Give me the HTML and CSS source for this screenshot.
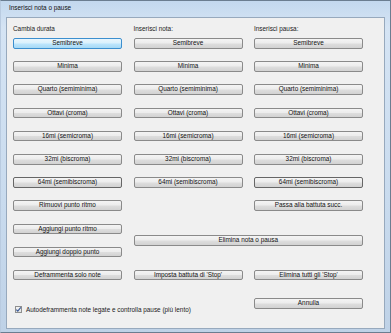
FILE: index.html
```html
<!DOCTYPE html>
<html lang="it">
<head>
    <meta charset="UTF-8">
    <title>Inserisci nota o pause</title>
    <link rel="stylesheet" href="styles.css">
</head>
<body>

<div class="window">
    <div class="title-bar">Inserisci nota o pause</div>
    <div class="client">
        <div class="labels">
            <span>Cambia durata</span>
            <span>Inserisci nota:</span>
            <span>Inserisci pausa:</span>
        </div>

        <div class="durations">
            <button class="focused">Semibreve</button>
            <button>Semibreve</button>
            <button>Semibreve</button>
            <button>Minima</button>
            <button>Minima</button>
            <button>Minima</button>
            <button>Quarto (semiminima)</button>
            <button>Quarto (semiminima)</button>
            <button>Quarto (semiminima)</button>
            <button>Ottavi (croma)</button>
            <button>Ottavi (croma)</button>
            <button>Ottavi (croma)</button>
            <button>16mi (semicroma)</button>
            <button>16mi (semicroma)</button>
            <button>16mi (semicroma)</button>
            <button>32mi (biscroma)</button>
            <button>32mi (biscroma)</button>
            <button>32mi (biscroma)</button>
            <button class="dark">64mi (semibiscroma)</button>
            <button>64mi (semibiscroma)</button>
            <button class="dark">64mi (semibiscroma)</button>
        </div>

        <div class="actions">
            <button class="rimuovi">Rimuovi punto ritmo</button>
            <button class="passa">Passa alla battuta succ.</button>
            <button class="aggiungi">Aggiungi punto ritmo</button>
            <button class="elimina">Elimina nota o pausa</button>
            <button class="doppio">Aggiungi doppio punto</button>
            <button class="deframmenta">Deframmenta solo note</button>
            <button class="imposta">Imposta battuta di 'Stop'</button>
            <button class="elimina-stop">Elimina tutti gli 'Stop'</button>
        </div>

        <div class="footer">
            <label class="check">
                <span class="check-box">
                    <svg width="7" height="7" viewBox="0 0 7 7"><path d="M1.3 3.6 L2.8 5.2 L5.8 1.4" fill="none" stroke="#3a5a96" stroke-width="1.1"/></svg>
                </span>
                Autodeframmenta note legate e controlla pause (più lento)
            </label>
            <button class="annulla">Annulla</button>
        </div>
    </div>
</div>

</body>
</html>
```

FILE: styles.css
```css
body {
    margin: 0;
    width: 391px;
    height: 333px;
    overflow: hidden;
    font-family: "Liberation Sans", Arial, sans-serif;
    font-size: 6.4px;
    color: #1b1b1b;
    background: #c6d9ee;
}
.window {
    box-sizing: border-box;
    width: 391px;
    height: 333px;
    border: 1px solid #6b7d90;
    border-left-color: #b9cbe0;
    background: linear-gradient(to bottom, #c3d8ee 0%, #d5e4f4 8%, #c9dbee 60%, #bfd2e7 100%);
    padding: 0 5px 3px 5px;
    display: flex;
    flex-direction: column;
}
.title-bar {
    height: 16px;
    line-height: 14px;
    padding-left: 3px;
    color: #101010;
    flex-shrink: 0;
}
.client {
    flex: 1;
    background: #f0f0f0;
    border: 1px solid #97a9bd;
    padding: 6px 0 0 6px;
}
.labels, .durations, .actions, .footer {
    display: grid;
    grid-template-columns: 109px 109px 109px;
    column-gap: 11.5px;
}
.labels {
    height: 14px;
    line-height: 9px;
    color: #222;
}
.durations {
    grid-auto-rows: 10.6px;
    row-gap: 12.6px;
    margin-bottom: 12.6px;
}
button {
    box-sizing: border-box;
    height: 10.6px;
    margin: 0;
    padding: 0;
    font-family: inherit;
    font-size: 6.4px;
    line-height: 1;
    color: #111;
    border: 1px solid #8a8a8a;
    border-radius: 2px;
    background: linear-gradient(to bottom, #f4f4f4 0%, #ececec 48%, #dedede 52%, #d2d2d2 100%);
}
button.focused {
    border-color: #3c8fcf;
    background: linear-gradient(to bottom, #eaf6fd 0%, #d9f0fc 48%, #bee6fd 52%, #a7d9f5 100%);
}
button.dark {
    border-color: #666;
}
.actions {
    grid-template-rows: repeat(7, 11.6px);
}
.rimuovi { grid-area: 1 / 1; }
.passa { grid-area: 1 / 3; }
.aggiungi { grid-area: 3 / 1; }
.elimina { grid-area: 4 / 2 / 5 / 4; }
.doppio { grid-area: 5 / 1; }
.deframmenta { grid-area: 7 / 1; }
.imposta { grid-area: 7 / 2; }
.elimina-stop { grid-area: 7 / 3; }
.footer {
    margin-top: 16.8px;
}
.check {
    grid-column: 1 / 3;
    display: flex;
    align-items: center;
    gap: 4px;
    margin-top: 7px;
    margin-left: 2px;
    height: 8px;
    white-space: nowrap;
}
.check-box {
    box-sizing: border-box;
    width: 7px;
    height: 7px;
    border: 1px solid #8e8f8f;
    background: linear-gradient(to bottom, #f4f4f4, #e4e4e4);
    display: flex;
}
.check-box svg {
    margin: -1px;
}
.annulla {
    grid-column: 3;
}
```
